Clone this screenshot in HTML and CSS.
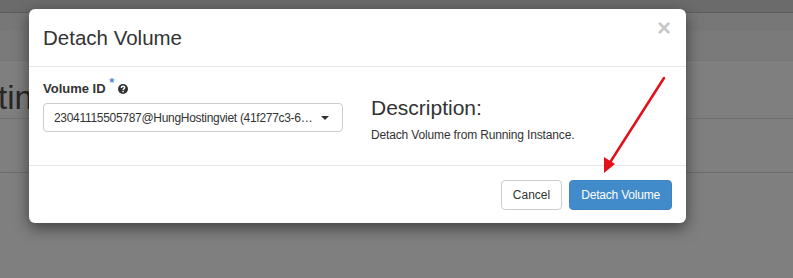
FILE: index.html
```html
<!DOCTYPE html>
<html lang="en">
<head>
    <meta charset="UTF-8">
    <title>Detach Volume</title>
    <link rel="stylesheet" href="styles.css">
</head>
<body>
    <!-- page behind the backdrop -->
    <div class="page">
        <div class="topbar"></div>
        <div class="subbar"></div>
        <div class="crumbs"></div>
        <div class="page-header"><h1>tin</h1></div>
        <div class="toolbar"></div>
        <div class="rest"></div>
    </div>

    <div class="modal">
        <div class="modal-header">
            <h4 class="modal-title">Detach Volume</h4>
            <span class="close">&times;</span>
        </div>
        <div class="modal-body">
            <div class="left">
                <label class="field-label">Volume ID <span class="req">*</span>
                    <svg class="help" width="10" height="10" viewBox="0 0 10 10">
                        <circle cx="5" cy="5" r="5" fill="#333"/>
                        <path d="M3.3 3.9 Q3.3 2.2 5 2.2 Q6.7 2.2 6.7 3.6 Q6.7 4.5 5.6 5 Q5.1 5.3 5.1 6" stroke="#fff" stroke-width="1.4" fill="none"/>
                        <rect x="4.3" y="6.8" width="1.5" height="1.4" fill="#fff"/>
                    </svg>
                </label>
                <div class="select">
                    <span class="value">23041115505787@HungHostingviet (41f277c3-6…</span>
                    <span class="caret"></span>
                </div>
            </div>
            <div class="right">
                <h3>Description:</h3>
                <p>Detach Volume from Running Instance.</p>
            </div>
        </div>
        <div class="modal-footer">
            <button class="btn btn-default">Cancel</button>
            <button class="btn btn-primary">Detach Volume</button>
        </div>
    </div>

    <svg class="arrow" width="793" height="278" viewBox="0 0 793 278">
        <line x1="664" y1="78" x2="609" y2="164" stroke="#e3101a" stroke-width="2.5" stroke-linecap="round"/>
        <polygon points="604,173 604,157 615,164" fill="#e3101a"/>
    </svg>
</body>
</html>
```

FILE: styles.css
```css
body {
    margin: 0;
    font-family: "Liberation Sans", Arial, sans-serif;
    background: #7f7f7f;
    width: 793px;
    height: 278px;
    overflow: hidden;
    position: relative;
}

.topbar {
    height: 12px;
    background: #6b6b6b;
    border-bottom: 1px solid #5e5e5e;
}

.subbar {
    height: 18px;
    background: #777;
}

.crumbs {
    height: 31px;
    background: #7a7a7a;
    border-bottom: 1px solid #858585;
}

.page-header {
    height: 55px;
    border-bottom: 1px solid #727272;
    overflow: hidden;
}

.page-header h1 {
    margin: 16px 0 0 -2px;
    font-size: 33px;
    font-weight: normal;
    color: #262626;
}

.toolbar {
    height: 53px;
    border-bottom: 1px solid #6c6c6c;
}

.modal {
    position: absolute;
    left: 29px;
    top: 9px;
    width: 657px;
    height: 214px;
    background: #fff;
    border-radius: 6px;
    box-shadow: 0 5px 15px rgba(0, 0, 0, 0.5);
    color: #333;
    display: flex;
    flex-direction: column;
}

.modal-header {
    height: 56px;
    border-bottom: 1px solid #e5e5e5;
    padding: 1px 14px 0;
    display: flex;
    align-items: center;
    justify-content: space-between;
}

.modal-title {
    margin: 0;
    font-size: 20.5px;
    font-weight: normal;
    color: #333;
}

.close {
    font-size: 24px;
    font-weight: bold;
    color: #c8c8c8;
    margin-top: -20px;
    margin-right: 1px;
}

.modal-body {
    height: 98px;
    border-bottom: 1px solid #e5e5e5;
    padding: 0 14px;
    display: flex;
    gap: 28px;
}

.left {
    width: 300px;
    padding-top: 14px;
}

.field-label {
    display: block;
    font-size: 13px;
    font-weight: bold;
    margin-bottom: 7px;
}

.req {
    color: #4a8ccf;
    position: relative;
    top: -6px;
    font-size: 13px;
}

.help {
    vertical-align: -1px;
}

.select {
    height: 27px;
    border: 1px solid #ccc;
    border-radius: 4px;
    display: flex;
    align-items: center;
    justify-content: space-between;
    padding: 0 13px 0 10px;
    font-size: 12px;
    color: #333;
}

.value {
    white-space: nowrap;
    overflow: hidden;
    letter-spacing: -0.3px;
}

.caret {
    flex-shrink: 0;
    margin-left: 6px;
    width: 0;
    height: 0;
    border-left: 4px solid transparent;
    border-right: 4px solid transparent;
    border-top: 4px solid #333;
}

.right h3 {
    margin: 29px 0 8px;
    font-size: 21px;
    font-weight: normal;
}

.right p {
    margin: 0;
    font-size: 12px;
    letter-spacing: -0.15px;
}

.modal-footer {
    flex: 1;
    padding: 0 14px;
    display: flex;
    align-items: center;
    justify-content: flex-end;
    gap: 7px;
}

.btn {
    height: 30px;
    font-family: "Liberation Sans", Arial, sans-serif;
    font-size: 12px;
    border-radius: 4px;
    border: 1px solid #ccc;
    padding: 0 11px;
}

.btn-default {
    background: #fff;
    color: #333;
}

.btn-primary {
    background: #428bca;
    border-color: #3f84c2;
    color: #fff;
    padding: 0 11px;
    letter-spacing: -0.2px;
}

.arrow {
    position: absolute;
    left: 0;
    top: 0;
}
```
